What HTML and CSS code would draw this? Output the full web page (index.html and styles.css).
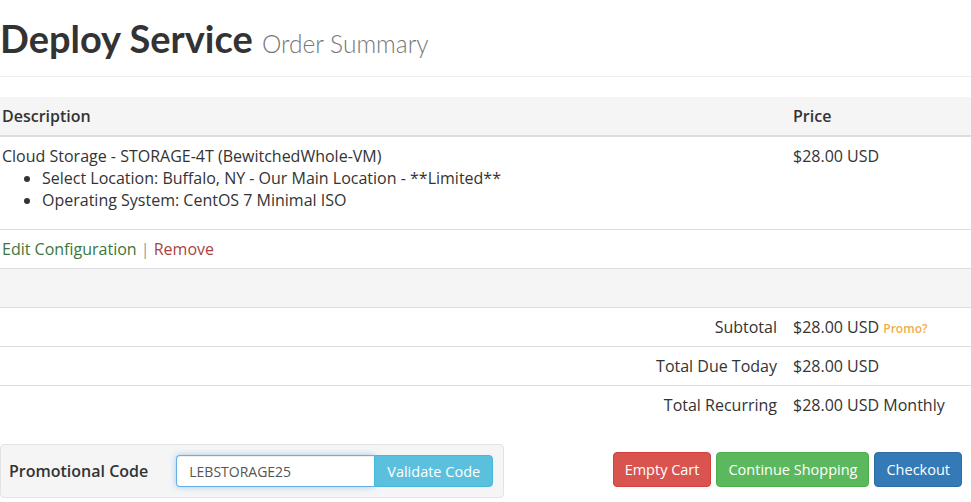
FILE: index.html
```html
<!DOCTYPE html>
<html>
<head>
	<title>Deploy Service - Order Summary</title>
	<meta name="viewport" content="width=device-width, initial-scale=1.0">
	<link rel="stylesheet" href="styles.css">
</head>
<body>
	<div class="wrap">
		<div class="page-header">
			<h1>Deploy Service <small>Order Summary</small></h1>
		</div>
		<table class="cart">
			<thead>
				<tr><th>Description</th><th class="price">Price</th></tr>
			</thead>
			<tbody>
				<tr>
					<td>
						Cloud Storage - STORAGE-4T (BewitchedWhole-VM)
						<ul>
							<li>Select Location: Buffalo, NY - Our Main Location - **Limited**</li>
							<li>Operating System: CentOS 7 Minimal ISO</li>
						</ul>
					</td>
					<td class="price">$28.00 USD</td>
				</tr>
				<tr>
					<td><a class="edit" href="#">Edit Configuration</a> <span class="sep">|</span> <a class="remove" href="#">Remove</a></td>
					<td></td>
				</tr>
				<tr class="blank"><td></td><td></td></tr>
				<tr class="total">
					<td>Subtotal</td>
					<td class="price">$28.00 USD <a class="promo" href="#">Promo?</a></td>
				</tr>
				<tr class="total">
					<td>Total Due Today</td>
					<td class="price">$28.00 USD</td>
				</tr>
				<tr class="total">
					<td>Total Recurring</td>
					<td class="price">$28.00 USD Monthly</td>
				</tr>
			</tbody>
		</table>
		<div class="actions">
			<form class="promo-box">
				<label for="code">Promotional Code</label>
				<div class="input-group">
					<input id="code" type="text" value="LEBSTORAGE25">
					<button type="button" class="btn btn-info">Validate Code</button>
				</div>
			</form>
			<div class="buttons">
				<a class="btn btn-danger" href="#">Empty Cart</a>
				<a class="btn btn-success" href="#">Continue Shopping</a>
				<a class="btn btn-primary" href="#">Checkout</a>
			</div>
		</div>
	</div>
</body>
</html>
```

FILE: styles.css
```css
body, html {
	margin: 0;
	font-family: "Open Sans", sans-serif;
	font-size: 16px;
	line-height: 22px;
	color: #333;
	background: #fff;
	overflow: hidden;
}
.wrap {
	width: 985px;
	margin-left: -6px;
}
.page-header {
	padding-bottom: 12px;
	margin: 0 6px 20px 6px;
	border-bottom: 1px solid #eee;
}
.page-header h1 {
	font-family: Lato, sans-serif;
	font-weight: 700;
	font-size: 38px;
	line-height: 40px;
	margin: 0;
	padding-top: 18px;
	color: #333;
}
.page-header small {
	font-weight: 300;
	font-size: 24.5px;
	color: #777;
}
.cart {
	width: 100%;
	border-collapse: collapse;
	margin-bottom: 20px;
}
.cart th, .cart td {
	padding: 8px;
	text-align: left;
	vertical-align: top;
	border-top: 1px solid #ddd;
}
.cart thead th {
	background: #f5f5f5;
	font-weight: 600;
	border-top: 0;
	border-bottom: 2px solid #ddd;
}
.cart .price {
	width: 178px;
}
.cart ul {
	margin: 0 0 10px 0;
	padding-left: 40px;
}
.cart .blank td {
	background: #f5f5f5;
	height: 22px;
}
.cart .total td {
	text-align: right;
}
.cart .total td.price {
	text-align: left;
}
a { text-decoration: none; }
.edit { color: #3c763d; }
.remove { color: #a94442; }
.sep { color: #999; }
.promo {
	font-size: 12px;
	line-height: 12px;
	font-weight: 600;
	color: #f0ad4e;
}
.actions {
	display: flex;
	justify-content: space-between;
	align-items: flex-start;
}
.promo-box {
	display: flex;
	align-items: center;
	gap: 28px;
	margin-left: 6px;
	padding: 10px 10px 10px 8px;
	background: #f5f5f5;
	border: 1px solid #e3e3e3;
	border-radius: 4px;
}
.promo-box label {
	font-weight: 600;
}
.input-group {
	display: flex;
}
.input-group input {
	width: 198px;
	height: 32px;
	box-sizing: border-box;
	padding: 6px 12px;
	font-family: "Open Sans", sans-serif;
	font-size: 14px;
	color: #555;
	border: 1px solid #66afe9;
	border-right: 0;
	border-radius: 4px 0 0 4px;
	box-shadow: inset 0 1px 1px rgba(0,0,0,.075), 0 0 6px rgba(102,175,233,.6);
	outline: 0;
}
.btn {
	display: inline-block;
	font-family: "Open Sans", sans-serif;
	font-size: 14.5px;
	line-height: 21px;
	padding: 6px 11px;
	color: #fff;
	border: 1px solid transparent;
	border-radius: 4px;
}
.input-group .btn {
	border-radius: 0 4px 4px 0;
	height: 32px;
	padding: 4px 12px;
}
.btn-info { background: #5bc0de; border-color: #46b8da; }
.btn-danger { background: #d9534f; border-color: #d43f3a; }
.btn-success { background: #5cb85c; border-color: #4cae4c; }
.btn-primary { background: #337ab7; border-color: #2e6da4; }
.buttons {
	display: flex;
	gap: 5px;
	margin-top: 8px;
	margin-right: 17px;
}
```
